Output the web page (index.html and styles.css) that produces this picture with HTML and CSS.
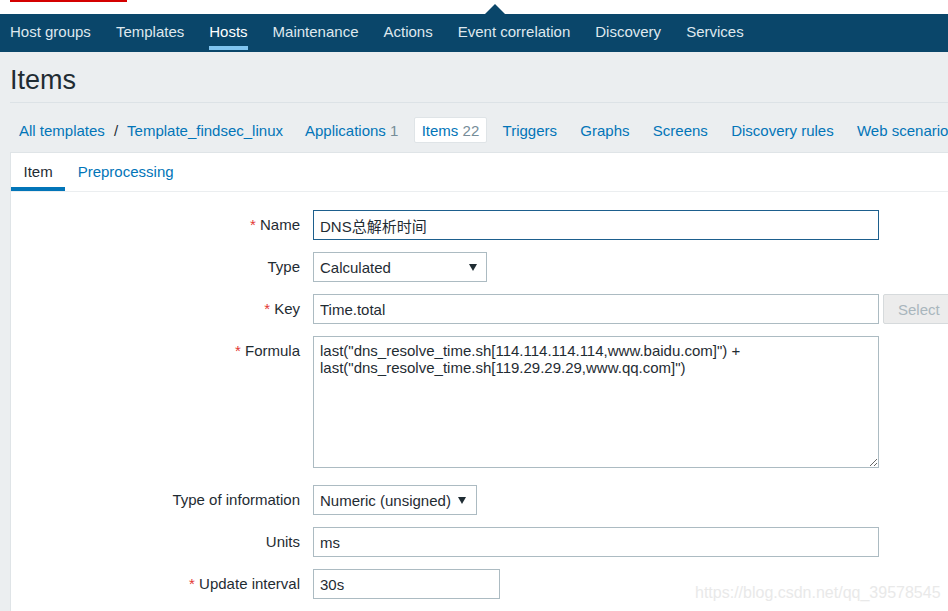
FILE: index.html
```html
<!DOCTYPE html>
<html lang="en">
<head>
<meta charset="utf-8">
<title>Items</title>
<link rel="stylesheet" href="styles.css">
</head>
<body>
<div class="topstrip"><span class="logo-bar"></span><span class="caret"></span></div>
<nav class="topnav">
  <a class="nav-item">Host groups</a>
  <a class="nav-item">Templates</a>
  <a class="nav-item active">Hosts</a>
  <a class="nav-item">Maintenance</a>
  <a class="nav-item">Actions</a>
  <a class="nav-item">Event correlation</a>
  <a class="nav-item">Discovery</a>
  <a class="nav-item">Services</a>
</nav>
<main class="content">
  <header class="page-header"><h1 class="page-title">Items</h1></header>
  <div class="subnav">
    <div class="breadcrumbs">
      <a class="link">All templates</a><span class="sep">/</span><a class="link">Template_findsec_linux</a>
    </div>
    <ul class="subtabs">
      <li class="subtab"><a class="link">Applications</a> <span class="count">1</span></li>
      <li class="subtab active"><a class="link">Items</a> <span class="count">22</span></li>
      <li class="subtab"><a class="link">Triggers</a></li>
      <li class="subtab"><a class="link">Graphs</a></li>
      <li class="subtab"><a class="link">Screens</a></li>
      <li class="subtab"><a class="link">Discovery rules</a></li>
      <li class="subtab"><a class="link">Web scenarios</a></li>
    </ul>
  </div>
  <section class="card">
    <div class="card-tabs">
      <span class="card-tab active">Item</span>
      <span class="card-tab"><a class="link">Preprocessing</a></span>
    </div>
    <form class="form">
      <label class="form-label"><span class="req">*</span> Name</label>
      <div class="form-field"><input class="input wide focused" type="text" value="DNS总解析时间"></div>

      <label class="form-label">Type</label>
      <div class="form-field">
        <div class="select type-select"><span>Calculated</span><svg class="arrow" width="8" height="7" viewBox="0 0 8 7"><polygon points="0,0 8,0 4,7" fill="#1f2c33"/></svg></div>
      </div>

      <label class="form-label"><span class="req">*</span> Key</label>
      <div class="form-field key-field"><input class="input wide" type="text" value="Time.total"><button class="btn-disabled" type="button">Select</button></div>

      <label class="form-label"><span class="req">*</span> Formula</label>
      <div class="form-field"><textarea class="textarea" spellcheck="false">last("dns_resolve_time.sh[114.114.114.114,www.baidu.com]") +
last("dns_resolve_time.sh[119.29.29.29,www.qq.com]")</textarea></div>

      <label class="form-label">Type of information</label>
      <div class="form-field">
        <div class="select info-select"><span>Numeric (unsigned)</span><svg class="arrow" width="8" height="7" viewBox="0 0 8 7"><polygon points="0,0 8,0 4,7" fill="#1f2c33"/></svg></div>
      </div>

      <label class="form-label">Units</label>
      <div class="form-field"><input class="input wide" type="text" value="ms"></div>

      <label class="form-label"><span class="req">*</span> Update interval</label>
      <div class="form-field"><input class="input short" type="text" value="30s"></div>
    </form>
  </section>
</main>
<div class="watermark">https://blog.csdn.net/qq_39578545</div>
</body>
</html>
```
FILE: styles.css
```css
html, body {
  margin: 0;
  padding: 0;
  overflow: hidden;
}
body {
  font-family: "Liberation Sans", Arial, sans-serif;
  font-size: 15px;
  color: #1f2c33;
  background: #ebeef0;
  width: 1100px;
  height: 611px;
  position: relative;
}
.topstrip {
  height: 14px;
  background: #fff;
  display: flex;
  align-items: flex-start;
}
.logo-bar {
  display: block;
  width: 117px;
  height: 2px;
  margin-left: 10px;
  background: #d40000;
}
.caret {
  display: block;
  align-self: flex-end;
  margin-left: 358px;
  width: 0;
  height: 0;
  border-left: 10px solid transparent;
  border-right: 10px solid transparent;
  border-bottom: 10px solid #0a466a;
}
.topnav {
  height: 38px;
  background: #0a466a;
  display: flex;
  gap: 25px;
  padding-left: 10px;
  box-sizing: border-box;
}
.nav-item {
  position: relative;
  line-height: 36px;
  color: #dfe8ee;
  white-space: nowrap;
}
.nav-item.active {
  color: #fff;
}
.nav-item.active::after {
  content: "";
  position: absolute;
  left: 0;
  right: 0;
  bottom: 2px;
  height: 4px;
  background: #80c4ef;
}
.content {
  padding: 0 0 0 10px;
}
.page-header {
  padding: 12px 0 6px;
  border-bottom: 1px solid #dce2e6;
}
.page-title {
  margin: 0;
  font-size: 27px;
  line-height: 32px;
  font-weight: normal;
  color: #1f2c33;
}
.subnav {
  display: flex;
  align-items: flex-start;
  padding: 14px 0 9px 9px;
  white-space: nowrap;
}
.breadcrumbs {
  display: flex;
  padding: 4px 0 2px;
  line-height: 20px;
}
.sep {
  margin: 0 9px;
  color: #1f2c33;
}
.link {
  color: #0275b8;
  text-decoration: none;
}
.subtabs {
  display: flex;
  gap: 7.3px;
  margin: 0 0 0 14px;
  padding: 0;
  list-style: none;
}
.subtab {
  padding: 3px 7px 1px;
  line-height: 20px;
  border: 1px solid transparent;
  border-radius: 2px;
}
.subtab.active {
  background: #fff;
  border-color: #dfe4e7;
}
.count {
  color: #768d99;
}
.card {
  width: 1000px;
  background: #fff;
  border: 1px solid #dfe4e7;
  border-right: none;
  height: 500px;
}
.card-tabs {
  display: flex;
  border-bottom: 1px solid #ebeef0;
}
.card-tab {
  padding: 10px 12.5px 6px;
  line-height: 18px;
  border-bottom: 4px solid transparent;
}
.card-tab.active {
  border-bottom-color: #0275b8;
  color: #1f2c33;
}
.form {
  display: grid;
  grid-template-columns: 289px auto;
  column-gap: 13px;
  row-gap: 12px;
  padding-top: 18px;
  align-items: start;
}
.form-label {
  text-align: right;
  line-height: 30px;
  white-space: nowrap;
}
.req {
  color: #e33734;
}
.form-field {
  display: flex;
  align-items: flex-start;
}
.input {
  box-sizing: border-box;
  height: 30px;
  border: 1px solid #acbbc2;
  border-radius: 0;
  padding: 0 6px;
  margin: 0;
  font-family: "Liberation Sans", Arial, "Noto Sans CJK SC", sans-serif;
  font-size: 15px;
  color: #1f2c33;
  background: #fff;
  outline: none;
}
.input.wide {
  width: 566px;
}
.input.short {
  width: 187px;
}
.input.focused {
  border-color: #1d5f8d;
}
.key-field {
  gap: 4px;
}
.btn-disabled {
  box-sizing: border-box;
  height: 30px;
  padding: 0 14px;
  font-family: "Liberation Sans", Arial, sans-serif;
  font-size: 15px;
  color: #a9b6bd;
  background: #ececec;
  border: 1px solid #d6dadc;
  border-radius: 2px;
}
.select {
  box-sizing: border-box;
  height: 30px;
  display: flex;
  align-items: center;
  justify-content: space-between;
  padding: 0 9px 0 6px;
  border: 1px solid #acbbc2;
  background: #fff;
  color: #1f2c33;
  white-space: nowrap;
}
.type-select {
  width: 174px;
}
.info-select {
  width: 164px;
  padding-right: 10px;
}
.textarea {
  display: block;
  box-sizing: border-box;
  width: 566px;
  height: 132px;
  margin: 0 0 5px;
  padding: 5px 6px;
  border: 1px solid #acbbc2;
  border-radius: 0;
  font-family: "Liberation Sans", Arial, sans-serif;
  font-size: 15px;
  line-height: 17px;
  color: #1f2c33;
  resize: both;
  outline: none;
}
.watermark {
  position: absolute;
  left: 695px;
  top: 584px;
  font-size: 16px;
  line-height: 18px;
  color: #e9e9e9;
  white-space: nowrap;
}
```
